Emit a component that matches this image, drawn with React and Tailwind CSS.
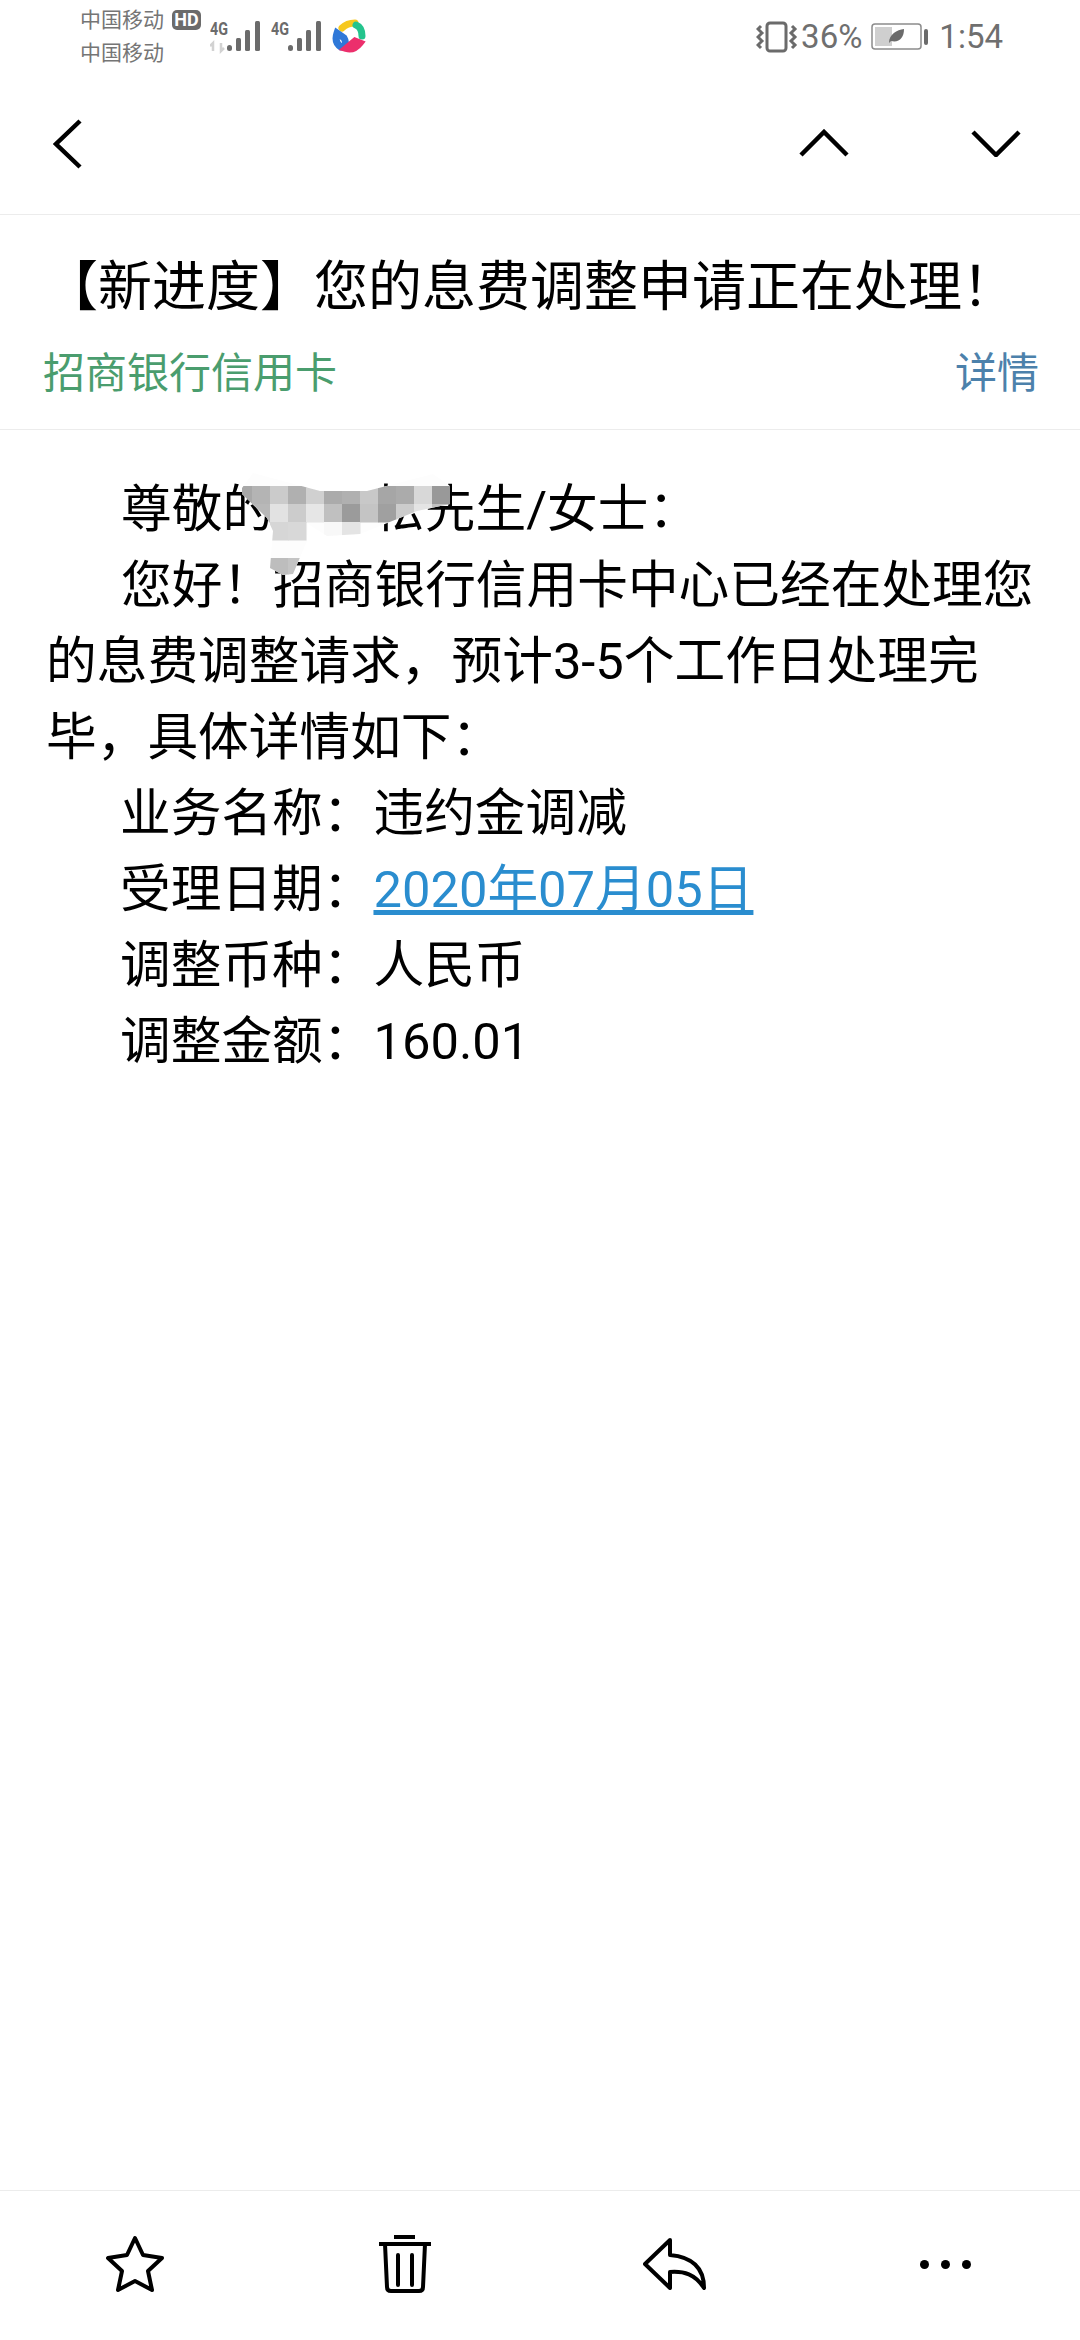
const FONT = "font-['Roboto','Noto_Sans_CJK_SC',sans-serif]";

function SignalBars({ x }) {
  return (
    <g fill="#6b6b6b" transform={`translate(${x} 0)`}>
      <rect x="0" y="45" width="5" height="6" rx="2.5" />
      <rect x="9" y="38" width="5" height="13" rx="1.5" />
      <rect x="18" y="30" width="5" height="21" rx="1.5" />
      <rect x="28" y="21" width="5" height="30" rx="1.5" />
    </g>
  );
}

function StatusLeft() {
  return (
    <div className="flex items-start pl-[80px]">
      <div className="w-[90px] pt-[4px] text-[21px] leading-[33px] text-[#757575]">
        <div>中国移动</div>
        <div>中国移动</div>
      </div>
      <div className="mt-[10px] ml-[2px] flex h-[20px] w-[29px] items-center justify-center rounded-[5px] bg-[#6b6b6b] text-[18px] leading-none font-bold text-white">
        HD
      </div>
      <svg className="ml-[9px]" width="120" height="60" viewBox="0 0 120 60">
        <text x="0" y="35" fontSize="18" fontWeight="700" fill="#6b6b6b" fontFamily="Roboto" textLength="18" lengthAdjust="spacingAndGlyphs">4G</text>
        <path d="M3 51V43l-3 3M11 43v8l3-3" stroke="#d2d2d2" strokeWidth="2.5" fill="none" />
        <SignalBars x={17} />
        <text x="61" y="35" fontSize="18" fontWeight="700" fill="#6b6b6b" fontFamily="Roboto" textLength="18" lengthAdjust="spacingAndGlyphs">4G</text>
        <SignalBars x={78} />
      </svg>
      <svg className="mt-[19px] ml-[2px]" width="34" height="34" viewBox="0 0 34 34" fill="none" strokeWidth="7" strokeLinecap="round">
        <path d="M10 9C14 5 18 4 23 4" stroke="#f6c81e" />
        <path d="M24 6C29 8 30 12 30 17" stroke="#24c48d" />
        <path d="M5 14C3 20 4.500 25 9 28C13 28 15 24 12 19Z" stroke="#2f78d8" />
        <path d="M14 29.500C19 31 24 29 28 24L23 22Z" stroke="#ec2f6c" />
      </svg>
    </div>
  );
}

function StatusRight() {
  return (
    <div className="flex items-center pr-[77px] text-[#6f6f6f]">
      <svg width="42" height="32" viewBox="0 0 42 32" fill="none" stroke="#6b6b6b">
        <rect x="11" y="2" width="19" height="28" rx="3" strokeWidth="3" />
        <path d="M5 5l-3 3 4 4-4 4 4 4-4 4 3 3M36 5l3 3-4 4 4 4-4 4 4 4-3 3" strokeWidth="3" />
      </svg>
      <span className="ml-[3px] text-[33px] leading-none">36%</span>
      <svg className="ml-[9px]" width="60" height="28" viewBox="0 0 60 28">
        <rect x="1" y="1" width="49" height="25" rx="3" fill="#fff" stroke="#8c8c8c" strokeWidth="1.500" />
        <rect x="4" y="4" width="17" height="19" fill="#cfcfcf" />
        <path d="M18 20C18 11 26 7 33 6C33 15 28 20 20 18Z" fill="#6b6b6b" />
        <rect x="53" y="6" width="4" height="16" rx="2" fill="#6b6b6b" />
      </svg>
      <span className="ml-[8px] text-[33px] leading-none">1:54</span>
    </div>
  );
}

// mosaic cells over the name in the greeting: [column, row, grey]
const mosaic = [
  [0, 0, "#a8a8a8"], [1, 0, "#b4b4b4"], [2, 0, "#cbcbcb"], [3, 0, "#b0b0b0"], [4, 0, "#d0d0d0"],
  [5, 0, "#ababab"], [6, 0, "#b0b0b0"], [7, 0, "#c8c8c8"], [8, 0, "#a6a6a6"], [9, 0, "#ababab"],
  [10, 0, "#d8d8d8"], [11, 0, "#999999"],
  [1, 1, "#b8b8b8"], [2, 1, "#e2e2e2"], [3, 1, "#cccccc"], [4, 1, "#e6e6e6"],
  [5, 1, "#c0c0c0"], [6, 1, "#9b9b9b"], [7, 1, "#c4c4c4"], [8, 1, "#a0a0a0"], [9, 1, "#cccccc"],
  [10, 1, "#e4e4e4"], [11, 1, "#c0c0c0"],
  [2, 2, "#d6d6d6"], [3, 2, "#d8d8d8"], [5, 2, "#f8f8f8"], [6, 2, "#e4e4e4"],
  [2, 4, "#bdbdbd"], [3, 4, "#c4c4c4"],
];

function NameMosaic() {
  return (
    <svg className="absolute top-[-49px] left-[-31px]" width="216" height="112" viewBox="0 0 216 112">
      <defs>
        <clipPath id="smear">
          <path d="M0 20L11 5L78 23L125 23L191 6L208 18L208 36L175 43L118 66L85 68L66 56L65 73L51 106L41 107L28 100L31 63L25 50L0 26Z" />
        </clipPath>
      </defs>
      <g clipPath="url(#smear)">
        <rect width="216" height="112" fill="#fdfdfd" />
        {mosaic.map(([col, row, grey]) => (
          <rect key={`${col}-${row}`} x={col * 18 - 8} y={row * 18 + 18} width="18.500" height="18.500" fill={grey} />
        ))}
      </g>
    </svg>
  );
}

function BodyRow({ label, children }) {
  return (
    <div className="pl-[74px]">
      {label}：{children}
    </div>
  );
}

export default function App() {
  return (
    <div className={`flex h-[2340px] w-[1080px] flex-col bg-white ${FONT}`}>
      <div className="flex h-[70px] items-start justify-between">
        <StatusLeft />
        <div className="pt-[20px]">
          <StatusRight />
        </div>
      </div>

      {/* Top actions */}
      <div className="flex h-[145px] items-center justify-between border-b border-[#ececec] pt-[3px]">
        <svg className="ml-[53px]" width="30" height="50" viewBox="0 0 30 50" fill="none" stroke="#000" strokeWidth="4.500">
          <path d="M27 2L3 25l24 23" />
        </svg>
        <div className="mt-[-1px] flex gap-[122px] pr-[59px]">
          <svg width="50" height="28" viewBox="0 0 50 28" fill="none" stroke="#000" strokeWidth="4.500">
            <path d="M2 26L25 3l23 23" />
          </svg>
          <svg width="50" height="28" viewBox="0 0 50 28" fill="none" stroke="#000" strokeWidth="4.500">
            <path d="M2 3l23 23L48 3" />
          </svg>
        </div>
      </div>

      {/* Subject and sender */}
      <div className="h-[215px] border-b border-[#ececec] pt-[43px]">
        <div className="pl-[44px] text-[54px] leading-[60px] whitespace-nowrap text-black">【新进度】您的息费调整申请正在处理！</div>
        <div className="mt-[26px] flex items-center justify-between pr-[41px] pl-[43px] text-[42px] leading-[60px]">
          <span className="text-[#4a9d6e]">招商银行信用卡</span>
          <span className="text-[#4c81ab]">详情</span>
        </div>
      </div>

      {/* Mail body */}
      <div className="flex-1 px-[46px] pt-[42px] text-[50.7px] leading-[76px] text-black">
        <div className="pl-[75px]">
          尊敬的
          <span className="relative inline-block h-[10px] w-[101px]">
            <NameMosaic />
          </span>
          松先生/女士：
        </div>
        <div className="pl-[75px]">您好！招商银行信用卡中心已经在处理您</div>
        <div>的息费调整请求，预计3-5个工作日处理完</div>
        <div>毕，具体详情如下：</div>
        <BodyRow label="业务名称">违约金调减</BodyRow>
        <BodyRow label="受理日期">
          <span className="text-[#2a8dcf] underline">2020年07月05日</span>
        </BodyRow>
        <BodyRow label="调整币种">人民币</BodyRow>
        <BodyRow label="调整金额">160.01</BodyRow>
      </div>

      {/* Bottom actions */}
      <div className="grid h-[150px] grid-cols-4 border-t border-[#ececec] pb-[3px]">
        <div className="flex items-center justify-center">
          <svg width="60" height="58" viewBox="0 0 60 58" fill="none" stroke="#000" strokeWidth="4" strokeLinejoin="round">
            <path d="M30 3l8 17 19 3-14 13 4 19-17-9-17 9 4-19L3 23l19-3Z" />
          </svg>
        </div>
        <div className="flex items-center justify-center">
          <svg width="54" height="58" viewBox="0 0 54 58" fill="none" stroke="#000" strokeWidth="4">
            <path d="M16 2h21M1 9h52" />
            <path d="M7 9l2 43c0 3 2 4 4 4h28c2 0 4-1 4-4l2-43" />
            <path d="M20 20v30M34 20v30" strokeLinecap="round" />
          </svg>
        </div>
        <div className="flex items-center justify-center">
          <svg width="64" height="52" viewBox="0 0 64 52" fill="none" stroke="#000" strokeWidth="4" strokeLinejoin="round">
            <path d="M27 2L2 26l25 24V34c14-1 25 2 34 16 0-20-12-31-34-33Z" />
          </svg>
        </div>
        <div className="flex items-center justify-center gap-[12px]">
          <span className="h-[9px] w-[9px] rounded-full bg-black" />
          <span className="h-[9px] w-[9px] rounded-full bg-black" />
          <span className="h-[9px] w-[9px] rounded-full bg-black" />
        </div>
      </div>
    </div>
  );
}
